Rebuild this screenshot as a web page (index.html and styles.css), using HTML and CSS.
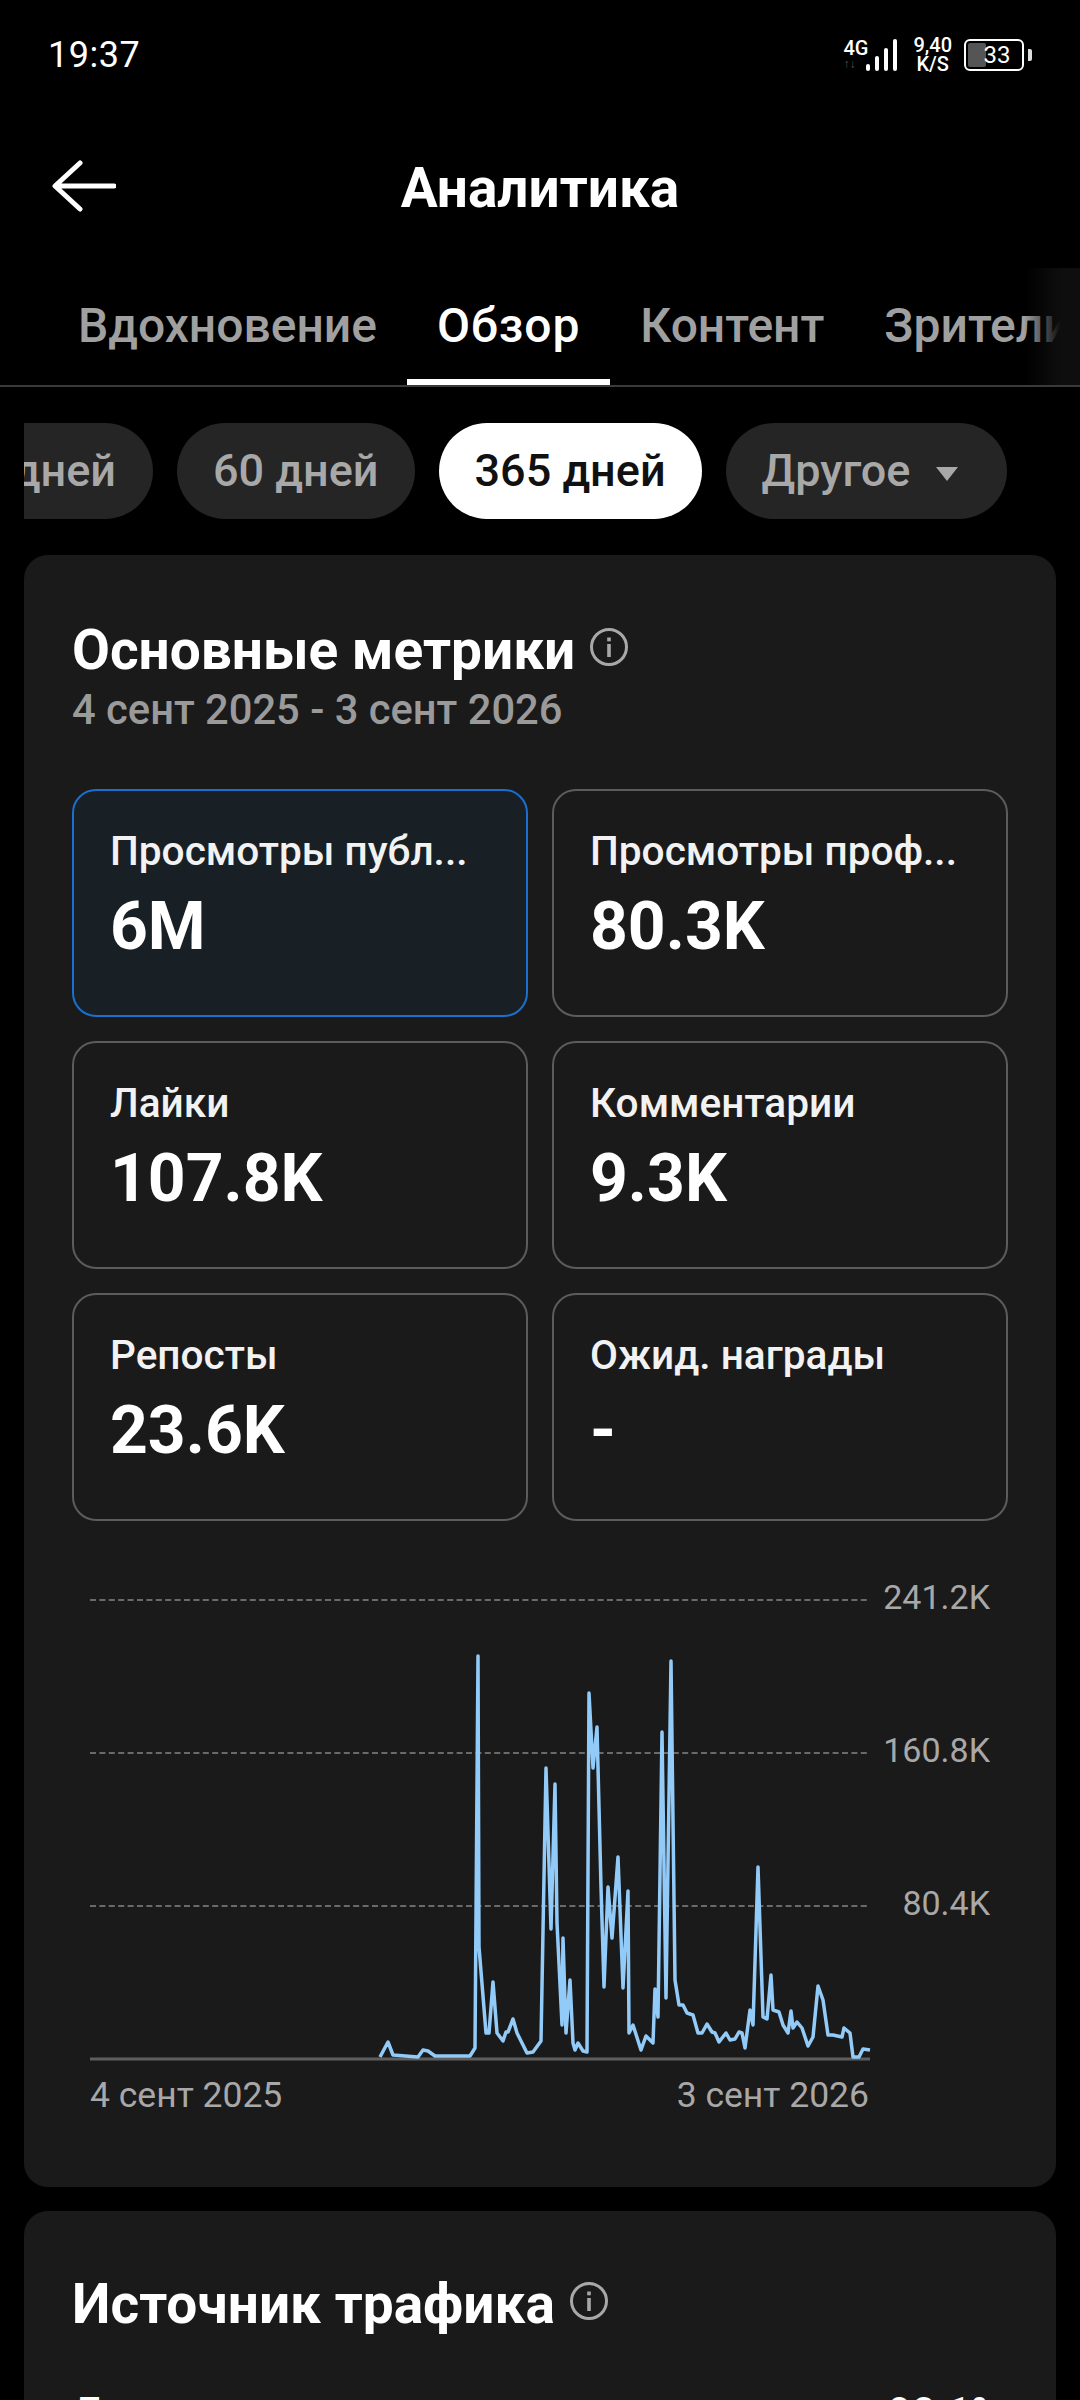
FILE: index.html
```html
<!DOCTYPE html>
<html lang="ru">
<head>
    <meta charset="UTF-8">
    <title>Аналитика</title>
    <link rel="stylesheet" href="styles.css">
</head>
<body>
    <!-- Status bar -->
    <div class="status-bar">
        <span class="status-time">19:37</span>
        <div class="status-icons">
            <div class="net-type"><span>4G</span><span class="net-arrows">↑↓</span></div>
            <svg class="signal" width="32" height="32" viewBox="0 0 32 32">
                <rect x="0" y="25" width="4" height="7" rx="2" fill="#fff"/>
                <rect x="9" y="17" width="4" height="15" rx="2" fill="#fff"/>
                <rect x="18" y="9" width="4" height="23" rx="2" fill="#fff"/>
                <rect x="27" y="0" width="4" height="32" rx="2" fill="#fff"/>
            </svg>
            <div class="net-speed"><span>9,40</span><span>K/S</span></div>
            <div class="battery">
                <div class="battery-body"><div class="battery-fill"></div><span class="battery-level">33</span></div>
                <div class="battery-cap"></div>
            </div>
        </div>
    </div>

    <!-- Header -->
    <div class="header">
        <svg class="back-icon" width="64" height="52" viewBox="0 0 64 52">
            <path d="M62 26H4M28 3L3 26l25 23" fill="none" stroke="#fff" stroke-width="5" stroke-linecap="round" stroke-linejoin="round"/>
        </svg>
        <h1>Аналитика</h1>
    </div>

    <!-- Tabs -->
    <div class="tabs">
        <div class="tab">Вдохновение</div>
        <div class="tab active">Обзор</div>
        <div class="tab">Контент</div>
        <div class="tab">Зрители</div>
        <div class="tabs-fade"></div>
    </div>

    <!-- Period chips -->
    <div class="chips">
        <div class="chip chip-cut"><span>28 дней</span></div>
        <div class="chip">60 дней</div>
        <div class="chip selected">365 дней</div>
        <div class="chip chip-menu">Другое <span class="caret"></span></div>
    </div>

    <!-- Main metrics -->
    <section class="card">
        <h2>Основные метрики
            <svg class="info" width="40" height="40" viewBox="0 0 40 40">
                <circle cx="20" cy="20" r="17.5" fill="none" stroke="#a8a8a8" stroke-width="3"/>
                <rect x="18.2" y="17" width="3.6" height="13" fill="#a8a8a8"/>
                <rect x="18.2" y="10.5" width="3.6" height="3.8" fill="#a8a8a8"/>
            </svg>
        </h2>
        <div class="date-range">4 сент 2025 - 3 сент 2026</div>

        <div class="metrics">
            <div class="metric current">
                <div class="metric-name">Просмотры публ...</div>
                <div class="metric-value">6M</div>
            </div>
            <div class="metric">
                <div class="metric-name">Просмотры проф...</div>
                <div class="metric-value">80.3K</div>
            </div>
            <div class="metric">
                <div class="metric-name">Лайки</div>
                <div class="metric-value">107.8K</div>
            </div>
            <div class="metric">
                <div class="metric-name">Комментарии</div>
                <div class="metric-value">9.3K</div>
            </div>
            <div class="metric">
                <div class="metric-name">Репосты</div>
                <div class="metric-value">23.6K</div>
            </div>
            <div class="metric">
                <div class="metric-name">Ожид. награды</div>
                <div class="metric-value">-</div>
            </div>
        </div>

        <div class="chart">
            <svg width="1032" height="570" viewBox="24 1560 1032 570">
                <line class="grid-line" x1="90" y1="1600" x2="868" y2="1600"/>
                <line class="grid-line" x1="90" y1="1753" x2="868" y2="1753"/>
                <line class="grid-line" x1="90" y1="1906" x2="868" y2="1906"/>
                <line class="base-line" x1="90" y1="2059" x2="870" y2="2059"/>
                <text class="y-label" x="990" y="1609">241.2K</text>
                <text class="y-label" x="990" y="1762">160.8K</text>
                <text class="y-label" x="990" y="1915">80.4K</text>
                <polyline class="trend" points="380,2057 388,2042 393,2055 418,2057 423,2050 428,2051 435,2056 470,2056 475,2048 478,1656 479,1947 486,2033 489,2033 493,1982 497,2033 503,2041 506,2032 508,2032 513,2019 517,2033 527,2053 533,2052 541,2041 546,1768 551,1929 555,1784 557,1923 562,2025 563,1938 566,2033 570,1980 573,2043 575,2050 578,2043 583,2051 587,2052 589,1693 593,1768 597,1727 601,1887 604,1987 608,1887 612,1938 618,1857 623,1988 628,1891 629,2033 633,2025 641,2050 646,2036 653,2043 655,1989 658,2017 662,1732 666,1998 671,1661 675,1980 679,2005 683,2005 687,2013 693,2015 698,2033 702,2033 707,2024 712,2032 715,2033 719,2042 726,2033 730,2040 735,2039 739,2032 742,2033 745,2048 750,2010 753,2025 758,1867 763,2017 767,2019 771,1975 773,2010 779,2012 783,2025 788,2033 791,2011 793,2028 797,2022 802,2028 808,2046 813,2037 818,1986 823,2000 828,2035 833,2035 842,2037 844,2028 850,2033 853,2057 859,2057 863,2049 870,2050"/>
                <text class="x-label" x="90" y="2107">4 сент 2025</text>
                <text class="x-label end" x="869" y="2107">3 сент 2026</text>
            </svg>
        </div>
    </section>

    <!-- Traffic source -->
    <section class="card card-next">
        <h2>Источник трафика
            <svg class="info" width="40" height="40" viewBox="0 0 40 40">
                <circle cx="20" cy="20" r="17.5" fill="none" stroke="#a8a8a8" stroke-width="3"/>
                <rect x="18.2" y="17" width="3.6" height="13" fill="#a8a8a8"/>
                <rect x="18.2" y="10.5" width="3.6" height="3.8" fill="#a8a8a8"/>
            </svg>
        </h2>
        <div class="source-row"><span>Для вас</span><span>90.1%</span></div>
    </section>
</body>
</html>
```

FILE: styles.css
```css
html, body {
    height: 2400px;
    overflow: hidden;
}

body {
    margin: 0;
    background: #000;
    color: #fff;
    font-family: Roboto, "Noto Sans", sans-serif;
}

/* Status bar */
.status-bar {
    height: 108px;
    padding: 2px 48px 0;
    display: flex;
    align-items: center;
    justify-content: space-between;
    box-sizing: border-box;
}

.status-time {
    font-size: 36px;
    letter-spacing: 0.5px;
}

.status-icons {
    display: flex;
    align-items: center;
}

.net-type, .net-speed {
    display: flex;
    flex-direction: column;
    align-items: center;
    font-size: 20px;
    font-weight: 500;
    line-height: 19px;
}

.net-arrows {
    font-size: 12px;
    line-height: 13px;
    color: #555;
    align-self: flex-start;
}

.signal {
    margin-left: -2px;
}

.net-speed {
    margin-left: 15px;
}

.battery {
    margin-left: 12px;
    display: flex;
    align-items: center;
}

.battery-body {
    position: relative;
    width: 60px;
    height: 32px;
    border: 2px solid #fff;
    border-radius: 6px;
    box-sizing: border-box;
    padding: 3px;
    display: flex;
    align-items: center;
    justify-content: center;
}

.battery-fill {
    position: absolute;
    left: 2px;
    top: 2px;
    bottom: 2px;
    width: 18px;
    background: #555;
    border-radius: 2px;
}

.battery-level {
    position: relative;
    margin-left: 6px;
    font-size: 24px;
}

.battery-cap {
    width: 4px;
    height: 12px;
    margin-left: 4px;
    background: #ddd;
    border-radius: 0 2px 2px 0;
}

/* Header */
.header {
    position: relative;
    height: 160px;
    display: flex;
    align-items: center;
    justify-content: center;
}

.back-icon {
    position: absolute;
    left: 52px;
    top: 52px;
}

.header h1 {
    margin: 0;
    font-size: 55px;
    font-weight: 700;
}

/* Tabs */
.tabs {
    position: relative;
    height: 117px;
    padding-left: 48px;
    display: flex;
    overflow: hidden;
    border-bottom: 2px solid #3a3a3a;
}

.tab {
    padding: 0 30px;
    height: 117px;
    line-height: 115px;
    font-size: 48px;
    font-weight: 500;
    color: #a0a0a0;
    white-space: nowrap;
    box-sizing: border-box;
}

.tab.active {
    color: #fff;
    letter-spacing: 0.9px;
    border-bottom: 6px solid #fff;
}

.tabs-fade {
    position: absolute;
    right: 0;
    top: 0;
    bottom: 0;
    width: 56px;
    background: linear-gradient(to right, rgba(14, 14, 14, 0), #0e0e0e 65%);
}

/* Chips */
.chips {
    display: flex;
    gap: 24px;
    padding: 36px 0 0 24px;
    height: 168px;
    box-sizing: border-box;
}

.chip {
    height: 96px;
    line-height: 96px;
    padding: 0 36px;
    border-radius: 48px;
    background: #252525;
    color: #a8a8a8;
    font-size: 45px;
    font-weight: 500;
    white-space: nowrap;
    box-sizing: border-box;
}

.chip.selected {
    background: #fff;
    color: #111;
}

.chip-cut {
    width: 129px;
    padding: 0 37px 0 0;
    overflow: hidden;
    border-radius: 0 48px 48px 0;
    display: flex;
    justify-content: flex-end;
}

.chip-menu {
    padding-right: 49px;
}

.caret {
    display: inline-block;
    margin-left: 14px;
    vertical-align: middle;
    border-left: 11px solid transparent;
    border-right: 11px solid transparent;
    border-top: 14px solid #a8a8a8;
}

/* Cards */
.card {
    margin: 0 24px;
    padding: 64px 48px 0;
    height: 1632px;
    background: #1a1a1a;
    border-radius: 24px;
    box-sizing: border-box;
}

.card-next {
    margin-top: 24px;
    height: 400px;
    padding-top: 62px;
}

.card h2 {
    margin: 0;
    font-size: 55px;
    font-weight: 700;
    line-height: 62px;
    display: flex;
    align-items: center;
    gap: 14px;
}

.info {
    margin-top: -6px;
}

.date-range {
    margin-top: 5px;
    font-size: 41.7px;
    font-weight: 500;
    color: #9a9a9a;
    line-height: 48px;
}

/* Metric boxes */
.metrics {
    margin-top: 55px;
    display: grid;
    grid-template-columns: 456px 456px;
    gap: 24px;
    grid-auto-rows: 228px;
}

.metric {
    padding: 38px 36px;
    border: 2px solid #5c5c5c;
    border-radius: 24px;
    box-sizing: border-box;
}

.metric.current {
    border-color: #1a6fd0;
    background: #192025;
}

.metric-name {
    font-size: 40.6px;
    font-weight: 500;
    line-height: 44px;
    color: #f2f2f2;
    white-space: nowrap;
}

.metric-value {
    margin-top: 14px;
    font-size: 66px;
    font-weight: 700;
    line-height: 80px;
}

/* Chart */
.chart {
    margin: 39px -48px 0;
    height: 570px;
}

.chart svg {
    display: block;
}

.grid-line {
    stroke: #858585;
    stroke-width: 1.5;
    stroke-dasharray: 6 3.4;
}

.base-line {
    stroke: #5e5e5e;
    stroke-width: 3;
}

.trend {
    fill: none;
    stroke: #92caf8;
    stroke-width: 3.5;
    stroke-linejoin: round;
}

.y-label {
    fill: #a8a8a8;
    font-size: 34px;
    text-anchor: end;
}

.x-label {
    fill: #a8a8a8;
    font-size: 35.5px;
}

.x-label.end {
    text-anchor: end;
}

.source-row {
    margin-top: 53px;
    padding-right: 6px;
    display: flex;
    justify-content: space-between;
    font-size: 42px;
    font-weight: 500;
}
```
